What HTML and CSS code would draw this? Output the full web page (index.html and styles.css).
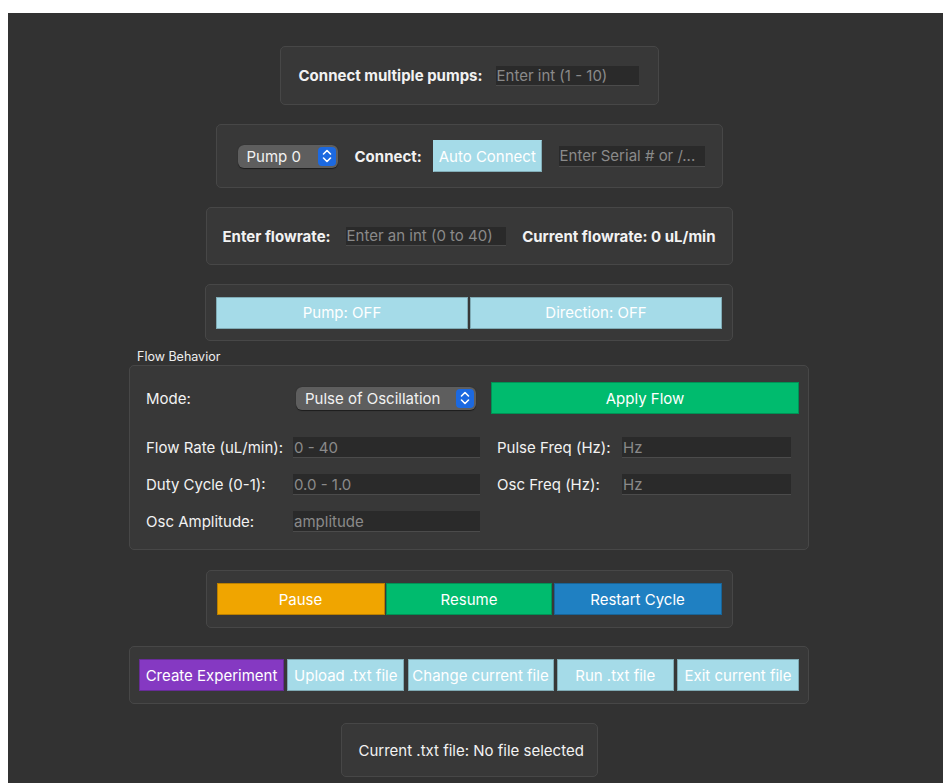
FILE: index.html
```html
<!DOCTYPE html>
<html lang="en">
<head>
<meta charset="utf-8">
<title>Pump Controller</title>
<link rel="stylesheet" href="styles.css">
</head>
<body>
<main class="app">
  <section class="panel panel-pumps">
    <span class="label bold">Connect multiple pumps:</span>
    <input class="field field-pumps" type="text" placeholder="Enter int (1 - 10)">
  </section>

  <section class="panel panel-connect">
    <div class="select select-pump">
      <span class="select-text">Pump 0</span>
      <span class="chevron"><svg width="18" height="20" viewBox="0 0 18 20"><path d="M5.5 8 L9 4.5 L12.5 8 M5.5 12 L9 15.5 L12.5 12" fill="none" stroke="#fff" stroke-width="1.6" stroke-linecap="round" stroke-linejoin="round"/></svg></span>
    </div>
    <span class="label bold">Connect:</span>
    <button class="btn btn-light btn-auto">Auto Connect</button>
    <input class="field field-serial" type="text" placeholder="Enter Serial # or /...">
  </section>

  <section class="panel panel-flowrate">
    <span class="label bold">Enter flowrate:</span>
    <input class="field field-flow" type="text" placeholder="Enter an int (0 to 40)">
    <span class="label bold current-rate">Current flowrate: 0 uL/min</span>
  </section>

  <section class="panel panel-toggle">
    <button class="btn btn-light btn-half">Pump: OFF</button>
    <button class="btn btn-light btn-half">Direction: OFF</button>
  </section>

  <div class="group">
    <div class="group-title">Flow Behavior</div>
    <section class="panel panel-behavior">
      <span class="label first-row">Mode:</span>
      <div class="select select-mode first-row">
        <span class="select-text">Pulse of Oscillation</span>
        <span class="chevron"><svg width="18" height="20" viewBox="0 0 18 20"><path d="M5.5 8 L9 4.5 L12.5 8 M5.5 12 L9 15.5 L12.5 12" fill="none" stroke="#fff" stroke-width="1.6" stroke-linecap="round" stroke-linejoin="round"/></svg></span>
      </div>
      <button class="btn btn-green btn-apply first-row">Apply Flow</button>

      <span class="label">Flow Rate (uL/min):</span>
      <input class="field field-grid" type="text" placeholder="0 - 40">
      <span class="label label-right">Pulse Freq (Hz):</span>
      <input class="field field-grid field-right" type="text" placeholder="Hz">

      <span class="label">Duty Cycle (0-1):</span>
      <input class="field field-grid" type="text" placeholder="0.0 - 1.0">
      <span class="label label-right">Osc Freq (Hz):</span>
      <input class="field field-grid field-right" type="text" placeholder="Hz">

      <span class="label">Osc Amplitude:</span>
      <input class="field field-grid" type="text" placeholder="amplitude">
    </section>
  </div>

  <section class="panel panel-cycle">
    <button class="btn btn-orange btn-pause">Pause</button>
    <button class="btn btn-green btn-resume">Resume</button>
    <button class="btn btn-blue btn-restart">Restart Cycle</button>
  </section>

  <section class="panel panel-files">
    <button class="btn btn-purple">Create Experiment</button>
    <button class="btn btn-light">Upload .txt file</button>
    <button class="btn btn-light">Change current file</button>
    <button class="btn btn-light">Run .txt file</button>
    <button class="btn btn-light">Exit current file</button>
  </section>

  <section class="panel panel-current">
    <span class="label">Current .txt file: No file selected</span>
  </section>
</main>
</body>
</html>
```

FILE: styles.css
```css
html, body {
  margin: 0;
  padding: 0;
  background: #ffffff;
}

body {
  padding: 13px 0 0 8px;
  height: 783px;
  box-sizing: border-box;
  overflow: hidden;
  font-family: "Inter", "Liberation Sans", sans-serif;
  font-size: 15px;
  color: #ffffff;
}

.app {
  background: #323232;
  height: 770px;
  width: 935px;
  box-sizing: border-box;
  padding: 33px 13px 0 0;
  display: flex;
  flex-direction: column;
  align-items: center;
  gap: 19px;
}

.panel {
  background: #383838;
  border: 1px solid #474747;
  border-radius: 5px;
  box-sizing: border-box;
  display: flex;
  align-items: center;
}

.label {
  color: #f2f2f2;
  white-space: nowrap;
}

.bold {
  font-weight: 700;
}

.field {
  font: inherit;
  font-size: 15px;
  color: #ddd;
  background: #2a2a2a;
  border: none;
  border-bottom: 1px solid #4b4b4b;
  padding: 0 1px;
  box-sizing: border-box;
  outline: none;
}

.field::placeholder {
  color: #8a8a8a;
}

.btn {
  font: inherit;
  font-size: 15px;
  color: #ffffff;
  border: 1px solid rgba(0, 0, 0, 0.22);
  border-radius: 0;
  height: 32px;
  padding: 0;
  box-sizing: border-box;
  white-space: nowrap;
  cursor: pointer;
}

.btn-light { background: #a5dbe8; }
.btn-green { background: #00bb6e; }
.btn-orange { background: #f0a500; }
.btn-blue { background: #1f80c2; }
.btn-purple { background: #8539c2; }

/* native-looking popup selector */
.select {
  display: flex;
  align-items: center;
  justify-content: space-between;
  background: #5e5e5e;
  border-radius: 6px;
  box-shadow: 0 0.5px 1px rgba(0, 0, 0, 0.5);
  height: 23px;
  padding: 0 2px 0 9px;
  box-sizing: border-box;
  color: #f2f2f2;
}

.chevron {
  display: flex;
  align-items: center;
  justify-content: center;
  width: 18px;
  height: 19px;
  background: #1c69e0;
  border-radius: 4px;
}

/* connect multiple pumps */
.panel-pumps {
  width: 379px;
  height: 59px;
  padding: 0 19px 0 18px;
  justify-content: space-between;
}

.field-pumps {
  width: 143px;
  height: 20px;
}

/* pump selection and serial */
.panel-connect {
  width: 507px;
  height: 64px;
  padding: 0 17px 0 21px;
}

.select-pump {
  width: 100px;
  margin-right: 17px;
}

.btn-auto {
  width: 109px;
  margin-left: 11px;
  border-color: transparent rgba(0, 0, 0, 0.2) rgba(0, 0, 0, 0.2) transparent;
}

.field-serial {
  width: 146px;
  height: 21px;
  margin-left: auto;
}

/* flow rate entry */
.panel-flowrate {
  width: 527px;
  height: 58px;
  padding: 0 16px;
  gap: 12px;
}

.field-flow {
  width: 160px;
  height: 19px;
  margin-left: 3px;
}

.current-rate {
  margin-left: auto;
}

/* pump / direction toggles */
.panel-toggle {
  width: 528px;
  height: 57px;
  padding: 0 10px;
  justify-content: space-between;
}

.btn-half {
  width: 252px;
}

/* flow behaviour group */
.group {
  display: flex;
  flex-direction: column;
  width: 680px;
  margin-top: -11px;
}

.group-title {
  font-size: 12.5px;
  color: #eeeeee;
  padding-left: 8px;
  height: 15px;
  line-height: 15px;
  margin-bottom: 1px;
}

.panel-behavior {
  width: 680px;
  height: 185px;
  display: grid;
  grid-template-columns: 147px 187px 11px 131px 169px;
  grid-template-rows: 39px 21px 21px 21px;
  row-gap: 16px;
  align-items: center;
  align-content: start;
  padding: 16px 0 0 16px;
}

.panel-behavior .first-row {
  margin-bottom: 7px;
}

.select-mode {
  grid-column: 2;
  width: 180px;
  margin-left: 3px;
}

.btn-apply {
  grid-column: 4 / span 2;
  width: 308px;
}

.panel-behavior .field-grid {
  grid-column: 2;
  width: 187px;
  height: 21px;
}

.panel-behavior .label {
  grid-column: 1;
}

.panel-behavior .label.label-right {
  grid-column: 4;
  padding-left: 6px;
}

.panel-behavior .field-right {
  grid-column: 5;
  width: 169px;
}

/* pause / resume / restart */
.panel-cycle {
  width: 527px;
  height: 58px;
  padding: 0 10px;
  justify-content: space-between;
  margin-top: 1px;
}

.btn-pause { width: 168px; }
.btn-resume { width: 166px; }
.btn-restart { width: 168px; }

/* experiment file actions */
.panel-files {
  width: 680px;
  height: 58px;
  padding: 0 9px;
  justify-content: space-between;
  margin-top: -1px;
}

.panel-files .btn:nth-child(1) { width: 145px; }
.panel-files .btn:nth-child(2) { width: 117px; }
.panel-files .btn:nth-child(3) { width: 146px; }
.panel-files .btn:nth-child(4) { width: 117px; }
.panel-files .btn:nth-child(5) { width: 122px; }

/* current file status */
.panel-current {
  width: 257px;
  height: 54px;
  padding: 0 17px;
}
```
